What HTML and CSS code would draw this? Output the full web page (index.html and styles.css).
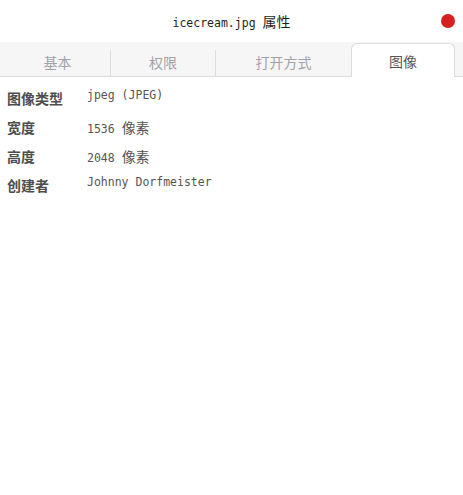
FILE: index.html
```html
<!DOCTYPE html>
<html lang="zh">
<head>
<meta charset="utf-8">
<title>icecream.jpg 属性</title>
<link rel="stylesheet" href="styles.css">
</head>
<body>
<div class="window">
  <header class="titlebar">
    <span></span>
    <h1 class="title">icecream.jpg <span class="cjk">属性</span></h1>
    <span class="close" aria-label="关闭"></span>
  </header>
  <nav class="tabbar">
    <div class="tab tab-basic sep">基本</div>
    <div class="tab tab-perm sep">权限</div>
    <div class="tab tab-open">打开方式</div>
    <div class="tab tab-image active">图像</div>
  </nav>
  <main class="props">
    <div class="label">图像类型</div>
    <div class="value v-plain">jpeg (JPEG)</div>
    <div class="label">宽度</div>
    <div class="value">1536 <span class="cjk">像素</span></div>
    <div class="label">高度</div>
    <div class="value">2048 <span class="cjk">像素</span></div>
    <div class="label">创建者</div>
    <div class="value v-plain">Johnny Dorfmeister</div>
  </main>
</div>
</body>
</html>
```
FILE: styles.css
```css
html, body {
  margin: 0;
  padding: 0;
  background: #ffffff;
}
body {
  width: 463px;
  height: 495px;
  overflow: hidden;
  font-family: "Noto Sans CJK SC", "Noto Sans", sans-serif;
}
.window {
  display: flex;
  flex-direction: column;
}
.titlebar {
  height: 42px;
  display: grid;
  grid-template-columns: 1fr auto 1fr;
  align-items: center;
}
.title {
  margin: 0;
  font-family: "DejaVu Sans Mono", "Noto Sans CJK SC", monospace;
  font-size: 11.5px;
  font-weight: normal;
  color: #1e1e1e;
  line-height: 20px;
  padding-top: 1px;
}
.title .cjk {
  font-family: "Noto Sans CJK SC", sans-serif;
  font-size: 14px;
}
.close {
  justify-self: end;
  width: 14px;
  height: 14px;
  border-radius: 50%;
  background: #d61f1f;
  margin-right: 8px;
}
.tabbar {
  height: 35px;
  box-sizing: border-box;
  background: #f6f6f6;
  border-bottom: 1px solid #dcdcdc;
  display: flex;
  align-items: flex-end;
  padding-left: 5px;
}
.tab {
  height: 26px;
  display: flex;
  align-items: center;
  justify-content: center;
  font-size: 14px;
  color: #a2a2aa;
  box-sizing: border-box;
  margin-bottom: 0;
  padding-bottom: 2px;
}
.tab-basic { width: 106px; }
.tab-perm { width: 105px; }
.tab-open { width: 135px; }
.tab-image { width: 104px; }
.sep {
  border-right: 1px solid #dcdcdc;
  height: 26px;
  align-self: flex-end;
  margin-bottom: -0px;
}
.tab.active {
  height: 34px;
  background: #ffffff;
  border: 1px solid #dcdcdc;
  border-bottom: none;
  border-radius: 6px 6px 0 0;
  color: #555555;
  margin-bottom: -1px;
  padding-bottom: 0;
}
.props {
  display: grid;
  grid-template-columns: 80px 1fr;
  padding: 7px 0 0 7px;
  grid-auto-rows: 29px;
}
.label {
  font-size: 14px;
  font-weight: bold;
  color: #4e4e4e;
  line-height: 29px;
}
.value {
  font-family: "DejaVu Sans Mono", monospace;
  font-size: 11.5px;
  color: #555555;
  line-height: 20px;
  padding-top: 4px;
}
.value.v-plain {
  line-height: 14px;
  padding-top: 4px;
}
.value .cjk {
  font-family: "Noto Sans CJK SC", sans-serif;
  font-size: 14px;
}
```
